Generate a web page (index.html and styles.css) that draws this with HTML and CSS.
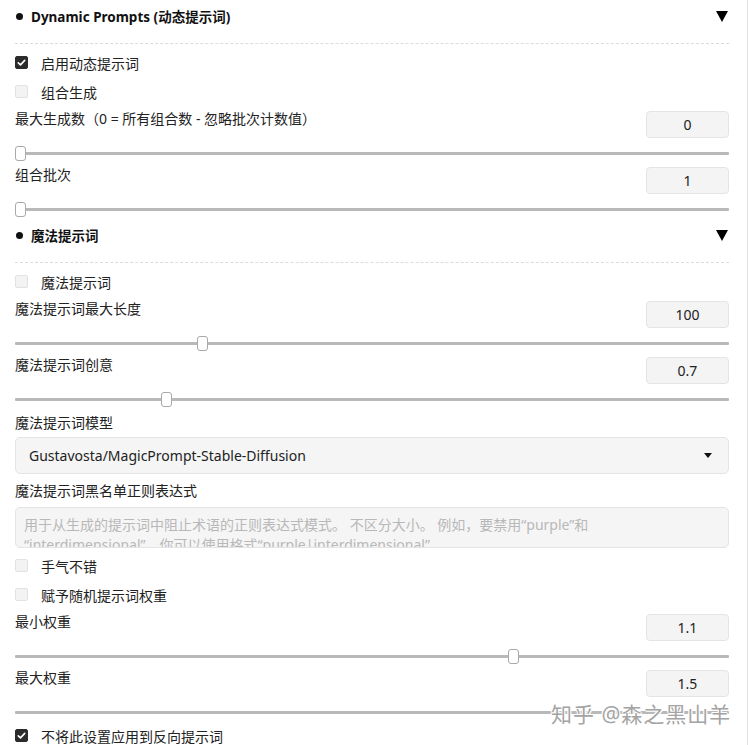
FILE: index.html
```html
<!DOCTYPE html>
<html lang="zh">
<head>
<meta charset="utf-8">
<link rel="stylesheet" href="styles.css">
</head>
<body>
<div class="page">
  <div class="panel">
    <div class="header first">
      <span class="bullet"></span>
      <span class="title">Dynamic Prompts (动态提示词)</span>
      <span class="caret"></span>
    </div>
    <div class="body">
      <label class="check"><span class="box on"><svg viewBox="0 0 13 13" width="13" height="13"><path d="M3.3 6.8 L5.5 8.9 L9.7 4.4" fill="none" stroke="#fff" stroke-width="1.6" stroke-linecap="round" stroke-linejoin="round"/></svg></span>启用动态提示词</label>
      <label class="check"><span class="box"></span>组合生成</label>
      <div class="slider-block">
        <div class="top"><span class="label">最大生成数（0 = 所有组合数 - 忽略批次计数值）</span><span class="num">0</span></div>
        <div class="track-row"><div class="track"><span class="thumb" style="left:0%"></span></div></div>
      </div>
      <div class="slider-block">
        <div class="top"><span class="label">组合批次</span><span class="num">1</span></div>
        <div class="track-row"><div class="track"><span class="thumb" style="left:0%"></span></div></div>
      </div>
    </div>

    <div class="header second">
      <span class="bullet"></span>
      <span class="title">魔法提示词</span>
      <span class="caret"></span>
    </div>
    <div class="body">
      <label class="check"><span class="box"></span>魔法提示词</label>
      <div class="slider-block">
        <div class="top"><span class="label">魔法提示词最大长度</span><span class="num">100</span></div>
        <div class="track-row"><div class="track"><span class="thumb" style="left:25.5%"></span></div></div>
      </div>
      <div class="slider-block">
        <div class="top"><span class="label">魔法提示词创意</span><span class="num">0.7</span></div>
        <div class="track-row"><div class="track"><span class="thumb" style="left:20.4%"></span></div></div>
      </div>
      <div class="field">
        <div class="label">魔法提示词模型</div>
        <div class="select"><span>Gustavosta/MagicPrompt-Stable-Diffusion</span><span class="mini-caret"></span></div>
      </div>
      <div class="field area-field">
        <div class="label">魔法提示词黑名单正则表达式</div>
        <div class="textarea">用于从生成的提示词中阻止术语的正则表达式模式。 不区分大小。 例如，要禁用“purple”和<br>“interdimensional”，你可以使用格式“purple|interdimensional”</div>
      </div>
      <label class="check"><span class="box"></span>手气不错</label>
      <label class="check"><span class="box"></span>赋予随机提示词权重</label>
      <div class="slider-block">
        <div class="top"><span class="label">最小权重</span><span class="num">1.1</span></div>
        <div class="track-row"><div class="track"><span class="thumb" style="left:69%"></span></div></div>
      </div>
      <div class="slider-block">
        <div class="top"><span class="label">最大权重</span><span class="num">1.5</span></div>
        <div class="track-row"><div class="track"></div></div>
      </div>
      <label class="check"><span class="box on"><svg viewBox="0 0 13 13" width="13" height="13"><path d="M3.3 6.8 L5.5 8.9 L9.7 4.4" fill="none" stroke="#fff" stroke-width="1.6" stroke-linecap="round" stroke-linejoin="round"/></svg></span>不将此设置应用到反向提示词</label>
    </div>
  </div>
  <div class="watermark">知乎 @森之黑山羊</div>
</div>
</body>
</html>
```

FILE: styles.css
```css
html, body {
  margin: 0;
  padding: 0;
  background: #fff;
}
body {
  font-family: "Noto Sans", "Noto Sans CJK SC", sans-serif;
  color: #222;
  font-size: 14px;
  overflow: hidden;
  height: 745px;
}
.page {
  position: relative;
  width: 748px;
  height: 745px;
  box-sizing: border-box;
  border-right: 1px solid #e4e4e4;
  padding: 0 18px 0 15px;
}
.panel {
  display: flex;
  flex-direction: column;
}
.header {
  display: flex;
  align-items: center;
  height: 30px;
  padding-bottom: 12px;
  border-bottom: 1px dashed #dcdcdc;
  margin-bottom: 4px;
}
.header.first { margin-top: 1px; }
.header.second { margin-top: 2px; }
.bullet {
  width: 7px;
  height: 7px;
  border-radius: 50%;
  background: #111;
  margin-left: 1px;
  margin-right: 8px;
}
.title {
  font-weight: 700;
  font-size: 13.5px;
  color: #111;
  flex: 1;
}
.caret {
  width: 0;
  height: 0;
  border-left: 6px solid transparent;
  border-right: 6px solid transparent;
  border-top: 11px solid #000;
  margin-right: 1px;
}
.body {
  display: flex;
  flex-direction: column;
}
.check {
  display: flex;
  align-items: center;
  height: 29px;
  font-size: 14px;
  color: #222;
}
.box {
  width: 13px;
  height: 13px;
  box-sizing: border-box;
  border: 1px solid #e2e2e2;
  background: #f3f3f3;
  border-radius: 2px;
  margin-right: 13px;
  display: flex;
}
.box.on {
  background: #2b2b2b;
  border-color: #2b2b2b;
}
.box.on svg { margin: -1px; }
.slider-block {
  display: flex;
  flex-direction: column;
  padding-top: 5px;
}
.top {
  display: flex;
  justify-content: space-between;
  align-items: flex-start;
  height: 27px;
}
.label {
  line-height: 20px;
  margin-top: -2px;
  font-size: 14px;
  color: #222;
}
.num {
  width: 83px;
  height: 27px;
  box-sizing: border-box;
  border: 1px solid #e4e4e4;
  background: #f4f4f4;
  border-radius: 4px;
  display: flex;
  align-items: center;
  justify-content: center;
  font-size: 14px;
  color: #222;
}
.track-row {
  height: 24px;
  padding-top: 14px;
  box-sizing: border-box;
}
.track {
  position: relative;
  height: 3px;
  background: #b9b9b9;
  border-radius: 1px;
}
.thumb {
  position: absolute;
  top: -6px;
  width: 11px;
  height: 15px;
  box-sizing: border-box;
  background: #fff;
  border: 1px solid #a9a9a9;
  border-radius: 3px;
}
.field {
  display: flex;
  flex-direction: column;
  padding-top: 5px;
}
.field .label {
  margin-top: 0;
  margin-bottom: 4px;
}
.select {
  height: 37px;
  box-sizing: border-box;
  border: 1px solid #e4e4e4;
  background: #f5f5f5;
  border-radius: 5px;
  display: flex;
  align-items: center;
  justify-content: space-between;
  padding: 0 16px 0 13px;
  font-size: 14px;
  color: #222;
}
.mini-caret {
  width: 0;
  height: 0;
  border-left: 4px solid transparent;
  border-right: 4px solid transparent;
  border-top: 5px solid #111;
}
.area-field { padding-top: 7px; }
.area-field .label { margin-bottom: 6px; }
.textarea {
  height: 41px;
  box-sizing: border-box;
  border: 1px solid #e4e4e4;
  background: #f5f5f5;
  border-radius: 5px;
  padding: 7px 8px 0 8px;
  font-size: 14px;
  line-height: 20px;
  color: #b8b8b8;
  overflow: hidden;
  margin-bottom: 3px;
  white-space: nowrap;
}
.watermark {
  position: absolute;
  left: 551px;
  top: 698px;
  font-size: 21px;
  color: #a4a4a4;
  letter-spacing: 1px;
  text-shadow: -1px 0 #fff, 1px 0 #fff, 0 -1px #fff, 0 1px #fff, 1px 1px #fff, -1px -1px #fff;
}
```
